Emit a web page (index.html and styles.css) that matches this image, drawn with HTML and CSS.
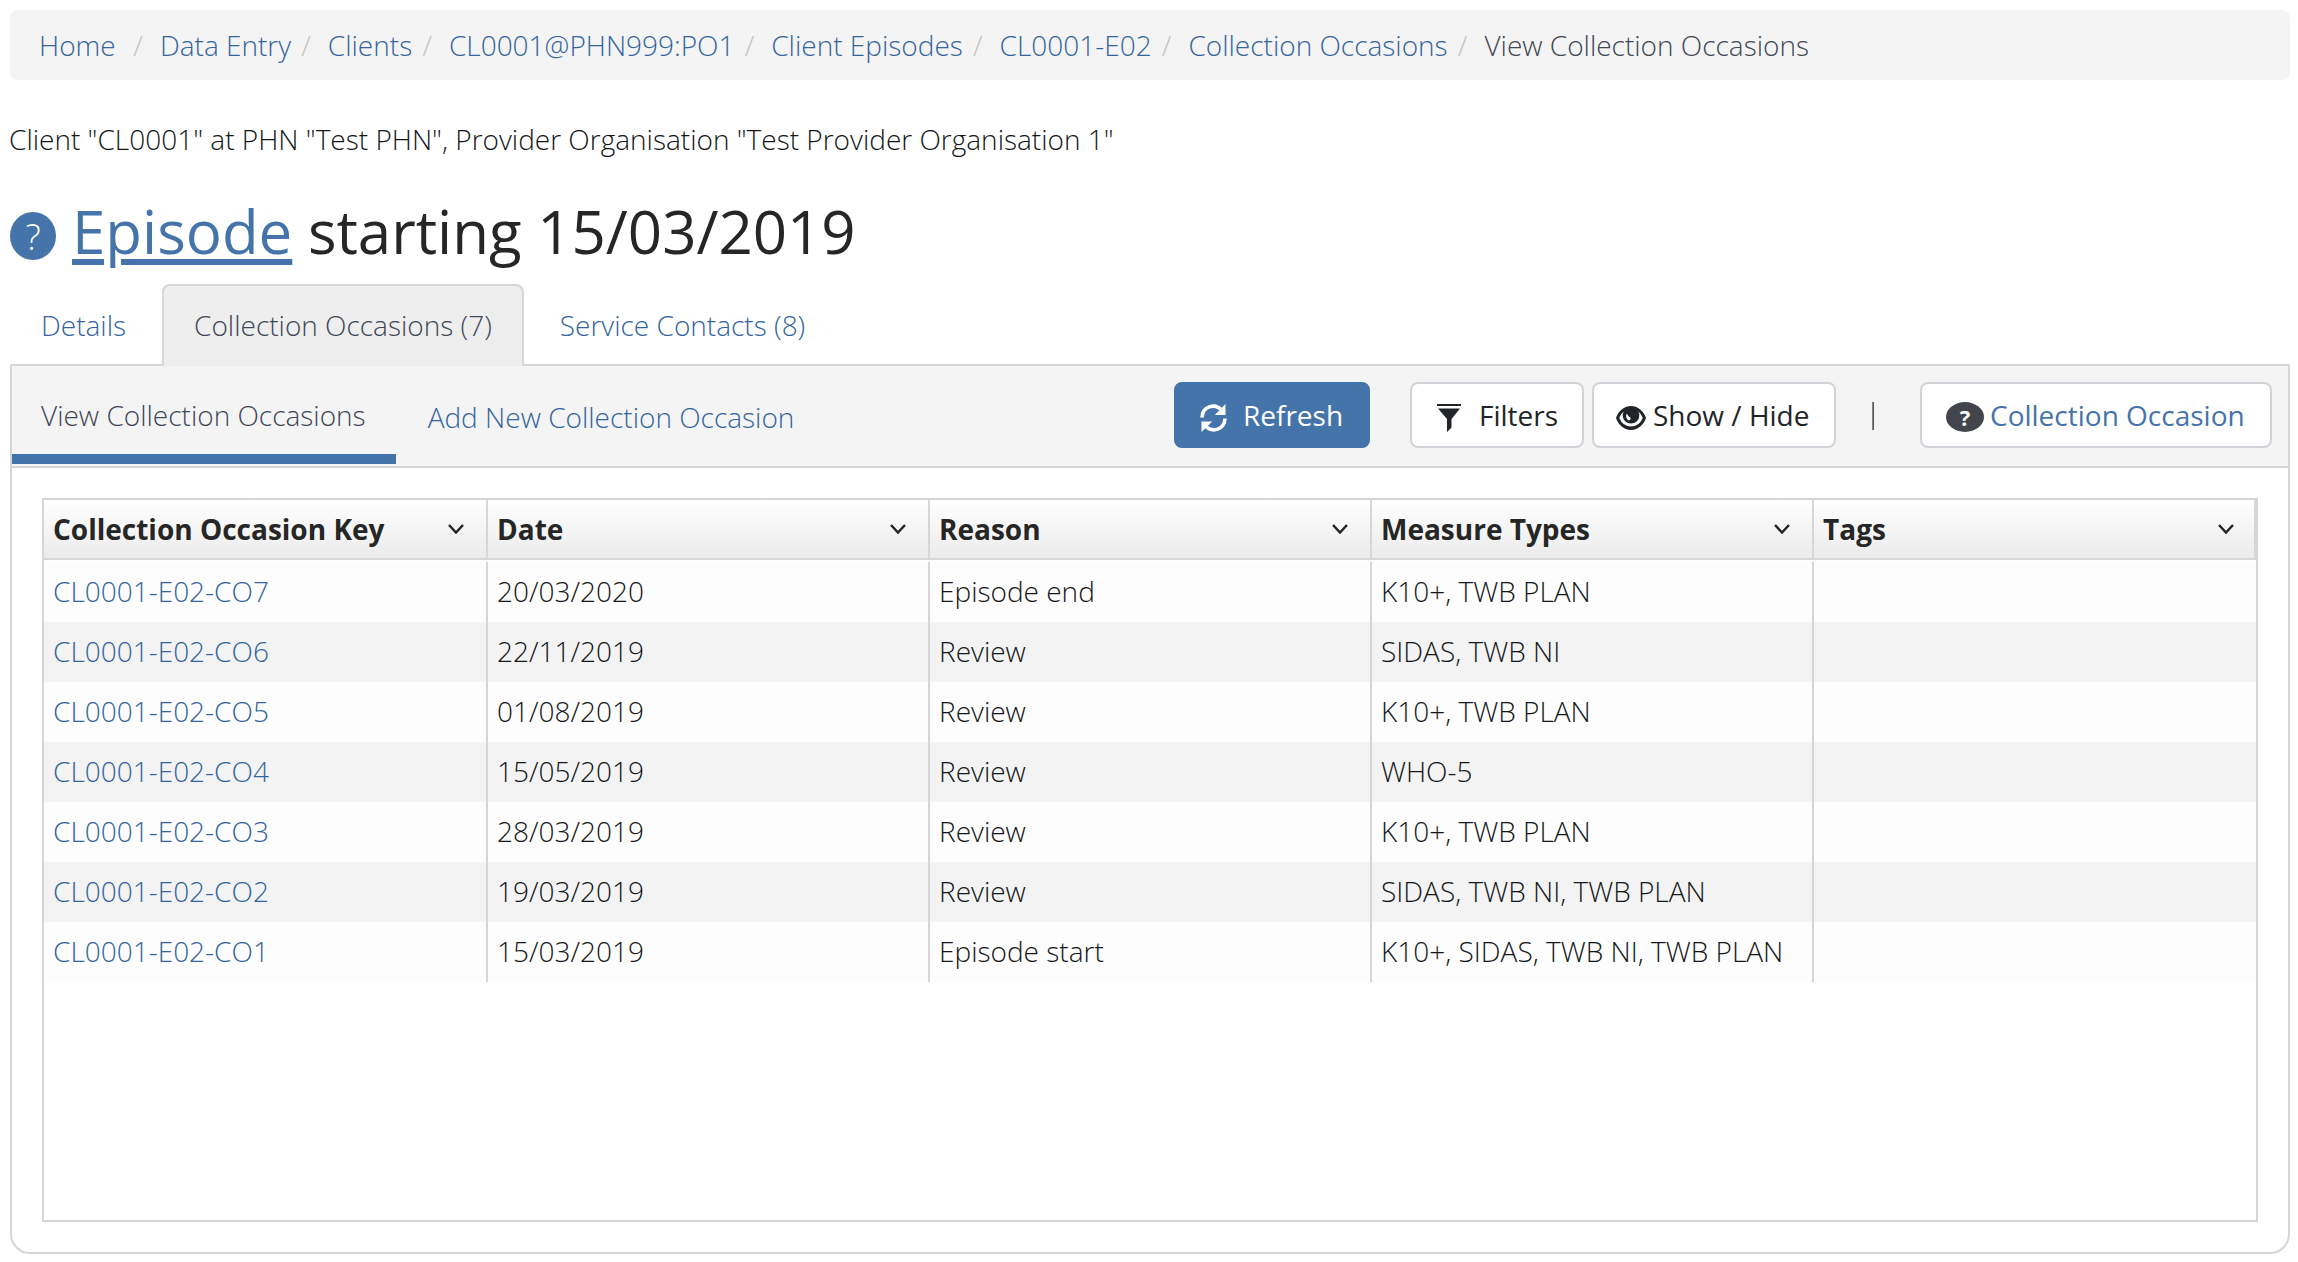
FILE: index.html
```html
<!DOCTYPE html>
<html lang="en">
<head>
<meta charset="utf-8">
<title>View Collection Occasions</title>
<link rel="stylesheet" href="styles.css">
</head>
<body>
<nav class="breadcrumb">
  <a class="home">Home</a><a>Data Entry</a><a>Clients</a><a>CL0001@PHN999:PO1</a><a>Client Episodes</a><a>CL0001-E02</a><a>Collection Occasions</a><span class="current">View Collection Occasions</span>
</nav>
<p class="client">Client "CL0001" at PHN "Test PHN", Provider Organisation "Test Provider Organisation 1"</p>
<h1><span class="help">?</span><span class="title"><a class="term">Episode</a> starting 15/03/2019</span></h1>
<div class="tabs">
  <a class="tab">Details</a>
  <a class="tab active">Collection Occasions (7)</a>
  <a class="tab">Service Contacts (8)</a>
</div>
<main class="panel">
  <div class="toolbar">
    <a class="sub selected">View Collection Occasions</a>
    <a class="sub">Add New Collection Occasion</a>
    <div class="actions">
      <button class="btn primary"><svg class="i-refresh" viewBox="0 0 27 28"><path d="M2 13.500C2.500 2.500 14.500-1.500 22 6.500M25 14.500C24.500 25.500 12.500 29.500 5 21.500" fill="none" stroke="currentColor" stroke-width="3.600"/><path d="M25.500 0v11H14.800zM1.500 28V17.500h10.700z"/></svg>Refresh</button>
      <button class="btn filters"><svg class="i-filter" viewBox="0 0 24 28"><path d="M0 0h24v2H0zM1 4.500h22l-8.500 10.500v8.500L10 28V15z"/></svg>Filters</button>
      <button class="btn show"><svg class="i-eye" viewBox="0 0 30 24"><path fill-rule="evenodd" d="M15 0C22.500 0 28 6 30 12 28 18 22.500 24 15 24S2 18 0 12C2 6 7.500 0 15 0zM7.800 5.500Q4.500 8 3.200 12 7 20.600 15 20.600T26.800 12Q25.500 8 22.200 5.500 23.300 7.500 23.300 9.500A8.300 8 0 0 1 6.700 9.500Q6.700 7.500 7.800 5.500z"/><path d="M10.800 7.500q-2 4.500 2 7 1.500-.5 2-2.500-2.500-1-4-4.500z" fill="#fff"/></svg>Show / Hide</button>
      <span class="divider">|</span>
      <button class="btn info"><span class="q">?</span>Collection Occasion</button>
    </div>
  </div>
  <div class="grid">
    <div class="row head">
      <div>Collection Occasion Key<svg class="chev" viewBox="0 0 16 10"><path d="M1 1l7 7.500L15 1"/></svg></div>
      <div>Date<svg class="chev" viewBox="0 0 16 10"><path d="M1 1l7 7.500L15 1"/></svg></div>
      <div>Reason<svg class="chev" viewBox="0 0 16 10"><path d="M1 1l7 7.500L15 1"/></svg></div>
      <div>Measure Types<svg class="chev" viewBox="0 0 16 10"><path d="M1 1l7 7.500L15 1"/></svg></div>
      <div>Tags<svg class="chev" viewBox="0 0 16 10"><path d="M1 1l7 7.500L15 1"/></svg></div>
    </div>
    <div class="rows">
      <div class="row"><div><a>CL0001-E02-CO7</a></div><div>20/03/2020</div><div>Episode end</div><div>K10+, TWB PLAN</div><div></div></div>
      <div class="row"><div><a>CL0001-E02-CO6</a></div><div>22/11/2019</div><div>Review</div><div>SIDAS, TWB NI</div><div></div></div>
      <div class="row"><div><a>CL0001-E02-CO5</a></div><div>01/08/2019</div><div>Review</div><div>K10+, TWB PLAN</div><div></div></div>
      <div class="row"><div><a>CL0001-E02-CO4</a></div><div>15/05/2019</div><div>Review</div><div>WHO-5</div><div></div></div>
      <div class="row"><div><a>CL0001-E02-CO3</a></div><div>28/03/2019</div><div>Review</div><div>K10+, TWB PLAN</div><div></div></div>
      <div class="row"><div><a>CL0001-E02-CO2</a></div><div>19/03/2019</div><div>Review</div><div>SIDAS, TWB NI, TWB PLAN</div><div></div></div>
      <div class="row"><div><a>CL0001-E02-CO1</a></div><div>15/03/2019</div><div>Episode start</div><div>K10+, SIDAS, TWB NI, TWB PLAN</div><div></div></div>
    </div>
  </div>
</main>
</body>
</html>
```
FILE: styles.css
```css
* { box-sizing: border-box; }
body {
  margin: 0;
  padding: 10px 8px 0 10px;
  background: #fff;
  color: #14171a;
  font: 300 28px/40px "Open Sans", sans-serif;
}
a { color: #34659e; }
.breadcrumb {
  display: flex;
  height: 70px;
  padding: 15px 30px 0 29px;
  background: #f4f4f4;
  border-radius: 8px;
  white-space: nowrap;
}
.breadcrumb > * + *::before {
  content: "/";
  color: #c4c4c4;
  padding: 0 17px 0 10.200px;
}
.breadcrumb .home { padding-right: 7.500px; }
.breadcrumb .current { color: #3f4856; }
.client { margin: 39px 0 0 -1px; }
h1 {
  display: flex;
  align-items: center;
  gap: 16px;
  height: 84px;
  margin: 32px 0 0;
  font-size: 60px;
  font-weight: 400;
  line-height: 84px;
  color: #262626;
}
.title { margin-top: -4px; }
.help {
  width: 46px;
  height: 48px;
  margin-top: 5px;
  border-radius: 50%;
  background: #4574ab;
  color: #fff;
  font-size: 36px;
  font-weight: 300;
  line-height: 49px;
  text-align: center;
}
.term {
  color: #4574ab;
  text-decoration: underline;
  text-decoration-thickness: 6px;
  text-underline-offset: 5px;
}
.tabs { display: flex; height: 82px; margin: 9px 0 -2px; position: relative; }
.tab {
  height: 82px;
  padding: 19px 31px 0 29px;
  line-height: 40px;
  border: 2px solid transparent;
  border-bottom: 0;
  border-radius: 8px 8px 0 0;
}
.tab:first-child { padding-right: 34px; }
.tab.active { padding-left: 30px; padding-right: 30px; background: #eee; border-color: #d6d6d6; color: #3f4856; }
.tab:last-child { padding-left: 34px; }
.panel {
  height: 890px;
  border: 2px solid #d6d6d6;
  border-radius: 0 0 20px 20px;
}
.toolbar {
  display: flex;
  height: 102px;
  background: #f4f4f4;
  border-bottom: 2px solid #d6d6d6;
}
.sub { height: 98px; padding: 31px 30px 0 32px; }
.selected { padding: 29px 30px 0 29px; border-bottom: 10px solid #4574ab; color: #3f4856; }
.actions { display: flex; margin: 16px 16px 0 auto; height: 66px; }
.btn {
  display: flex;
  align-items: center;
  height: 66px;
  padding: 0 0 0 24px;
  border: 2px solid #d0d3d7;
  border-radius: 8px;
  background: #fff;
  color: #212529;
  font: 400 28px/40px "Open Sans", sans-serif;
  white-space: nowrap;
}
.btn svg { fill: currentColor; }
.primary { width: 196px; margin-right: 40px; background: #4574ab; border-color: #4574ab; color: #fff; }
.filters { width: 174px; margin-right: 8px; padding-left: 25px; }
.show { width: 244px; padding-left: 22px; }
.info { width: 352px; color: #4574ab; }
.i-refresh { width: 27px; height: 28px; margin: 5px 16px 0 0; }
.i-filter { width: 24px; height: 28px; margin: 5px 18px 0 0; }
.i-eye { width: 30px; height: 24px; margin: 5px 7px 0 0; }
.divider { width: 84px; padding: 10px 10px 0 0; text-align: center; }
.q {
  width: 38px;
  height: 30px;
  margin: 4px 6px 0 0;
  border-radius: 50%;
  background: #42464c;
  color: #fff;
  font-size: 22px;
  font-weight: 700;
  line-height: 30px;
  text-align: center;
}
.grid {
  height: 724px;
  margin: 30px 30px 0;
  border: 2px solid #d6d6d6;
}
.row { display: grid; grid-template-columns: 444px repeat(3, 442px) 1fr; height: 60px; }
.row > div { padding: 9px 0 0 9px; border-right: 2px solid #d6d6d6; }
.row > div:last-child { border-right: 0; }
.head { background: linear-gradient(#fff, #ebebeb); border-bottom: 2px solid #d6d6d6; font-weight: 700; color: #262626; }
.head > div { display: flex; justify-content: space-between; }
.head > div:last-child { border-right: 2px solid #d6d6d6; }
.chev { width: 16px; height: 10px; margin: 15px 22px 0 0; fill: none; stroke: #262626; stroke-width: 2.500; }
.head > div:last-child .chev { margin-right: 20px; }
.rows { padding-top: 2px; }
.rows .row { background: #fdfdfd; }
.rows .row:nth-child(even) { background: #f3f3f3; }
```
